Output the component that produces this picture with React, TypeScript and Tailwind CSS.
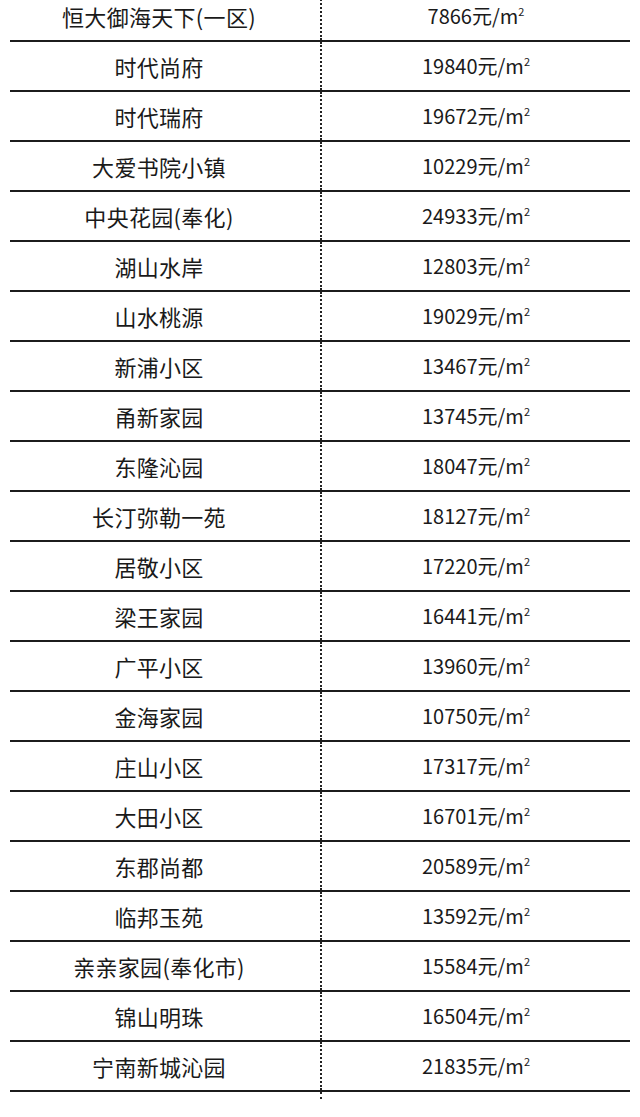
const rows: [string, string][] = [
  ["恒大御海天下(一区)", "7866"],
  ["时代尚府", "19840"],
  ["时代瑞府", "19672"],
  ["大爱书院小镇", "10229"],
  ["中央花园(奉化)", "24933"],
  ["湖山水岸", "12803"],
  ["山水桃源", "19029"],
  ["新浦小区", "13467"],
  ["甬新家园", "13745"],
  ["东隆沁园", "18047"],
  ["长汀弥勒一苑", "18127"],
  ["居敬小区", "17220"],
  ["梁王家园", "16441"],
  ["广平小区", "13960"],
  ["金海家园", "10750"],
  ["庄山小区", "17317"],
  ["大田小区", "16701"],
  ["东郡尚都", "20589"],
  ["临邦玉苑", "13592"],
  ["亲亲家园(奉化市)", "15584"],
  ["锦山明珠", "16504"],
  ["宁南新城沁园", "21835"],
];

function PriceRow({ name, price }: { name: string; price: string }) {
  return (
    <div className="grid h-[50px] grid-cols-[312px_308px] border-b-2 border-[#1c1c1c]">
      <div className="flex items-center justify-center border-r-2 border-dotted border-[#222] pr-[12px] text-[22px] tracking-[0.3px]">
        {name}
      </div>
      <div className="flex items-center justify-center text-[20px]">
        <span>
          {price}元/m
          <span className="relative -top-[8px] text-[11px]">2</span>
        </span>
      </div>
    </div>
  );
}

export default function App() {
  return (
    <div
      className="h-[1117px] w-[640px] overflow-hidden bg-white text-[#1a1a1a]"
      style={{ fontFamily: '"Noto Sans CJK SC", "Noto Sans", sans-serif' }}
    >
      <div className="mx-[10px] -mt-[8px]">
        {rows.map(([name, price]) => (
          <PriceRow key={name} name={name} price={price} />
        ))}
        <div className="grid h-[7px] grid-cols-[312px_308px]">
          <div className="border-r-2 border-dotted border-[#222]" />
          <div />
        </div>
      </div>
    </div>
  );
}
